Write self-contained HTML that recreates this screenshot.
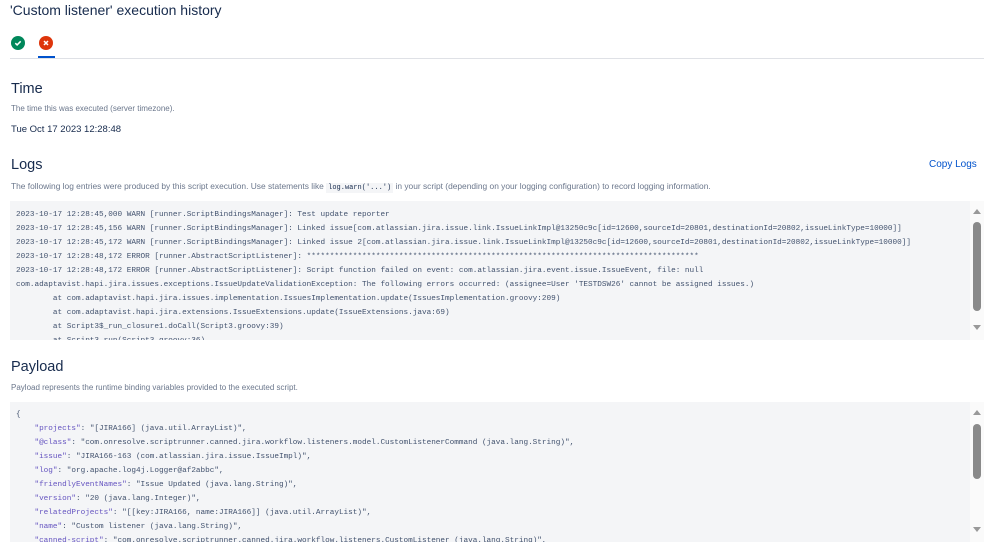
<!DOCTYPE html>
<html><head><meta charset="utf-8"><style>
*{margin:0;padding:0;box-sizing:border-box}
body{width:999px;height:560px;overflow:hidden;background:#fff;font-family:"Liberation Sans",sans-serif;color:#172b4d;position:relative}
.a{position:absolute;white-space:nowrap}
h1{font-weight:normal;font-size:14px}
h2{font-weight:normal;font-size:14.5px}
.d{font-size:8px;color:#6b778c}
.box{position:absolute;left:10px;width:974px;background:#f4f5f7;overflow:hidden}
.sb{position:absolute;right:0;top:0;bottom:0;width:14px;background:#fafafa}
.th{position:absolute;left:3px;width:8px;border-radius:4px;background:#8a8a8a}
.up,.dn{position:absolute;left:3px;width:0;height:0;border-left:4px solid transparent;border-right:4px solid transparent}
.up{border-bottom:5px solid #999}
.dn{border-top:5px solid #999}
pre{position:absolute;left:6px;font-family:"Liberation Mono",monospace;font-size:7.7px;line-height:14px;color:#42526e}
.k{color:#6554c0}
</style></head><body>
<h1 class="a" style="left:10px;top:2px">'Custom listener' execution history</h1>
<svg class="a" style="left:11px;top:36px" width="14" height="14"><circle cx="7" cy="7" r="7" fill="#00875a"/><path d="M4.3 7.2l1.8 1.7 3.6-3.6" stroke="#fff" stroke-width="1.5" fill="none"/></svg>
<svg class="a" style="left:39px;top:36px" width="14" height="14"><circle cx="7" cy="7" r="7" fill="#de350b"/><path d="M5 5l4 4M9 5l-4 4" stroke="#fff" stroke-width="1.5"/></svg>
<div class="a" style="left:10px;top:58px;width:974px;height:1px;background:#dfe1e6"></div>
<div class="a" style="left:38px;top:56px;width:17px;height:2px;background:#0052cc"></div>
<h2 class="a" style="left:11px;top:81px">Time</h2>
<div class="a d" style="left:11px;top:104px">The time this was executed (server timezone).</div>
<div class="a" style="left:11px;top:124px;font-size:9.5px">Tue Oct 17 2023 12:28:48</div>
<h2 class="a" style="left:11px;top:157px">Logs</h2>
<div class="a" style="left:929px;top:159px;font-size:10px;color:#0052cc">Copy Logs</div>
<div class="a d" style="left:11px;top:181px;font-size:8.4px">The following log entries were produced by this script execution. Use statements like <span style="font-family:'Liberation Mono',monospace;font-size:7px;background:#f4f5f7;padding:1px 2px;color:#172b4d">log.warn('...')</span> in your script (depending on your logging configuration) to record logging information.</div>
<div class="box" style="top:201px;height:139px">
<pre style="top:7px">2023-10-17 12:28:45,000 WARN [runner.ScriptBindingsManager]: Test update reporter
2023-10-17 12:28:45,156 WARN [runner.ScriptBindingsManager]: Linked issue[com.atlassian.jira.issue.link.IssueLinkImpl@13250c9c[id=12600,sourceId=20801,destinationId=20802,issueLinkType=10000]]
2023-10-17 12:28:45,172 WARN [runner.ScriptBindingsManager]: Linked issue 2[com.atlassian.jira.issue.link.IssueLinkImpl@13250c9c[id=12600,sourceId=20801,destinationId=20802,issueLinkType=10000]]
2023-10-17 12:28:48,172 ERROR [runner.AbstractScriptListener]: *************************************************************************************
2023-10-17 12:28:48,172 ERROR [runner.AbstractScriptListener]: Script function failed on event: com.atlassian.jira.event.issue.IssueEvent, file: null
com.adaptavist.hapi.jira.issues.exceptions.IssueUpdateValidationException: The following errors occurred: (assignee=User 'TESTDSW26' cannot be assigned issues.)
        at com.adaptavist.hapi.jira.issues.implementation.IssuesImplementation.update(IssuesImplementation.groovy:209)
        at com.adaptavist.hapi.jira.extensions.IssueExtensions.update(IssueExtensions.java:69)
        at Script3$_run_closure1.doCall(Script3.groovy:39)
        at Script3.run(Script3.groovy:36)</pre>
<div class="sb"><div class="up" style="top:8px"></div><div class="th" style="top:21px;height:89px"></div><div class="dn" style="top:124px"></div></div>
</div>
<h2 class="a" style="left:11px;top:359px">Payload</h2>
<div class="a d" style="left:11px;top:383px">Payload represents the runtime binding variables provided to the executed script.</div>
<div class="box" style="top:402px;height:140px">
<pre style="top:6px">{
    <span class="k">"projects"</span>: "[JIRA166] (java.util.ArrayList)",
    <span class="k">"@class"</span>: "com.onresolve.scriptrunner.canned.jira.workflow.listeners.model.CustomListenerCommand (java.lang.String)",
    <span class="k">"issue"</span>: "JIRA166-163 (com.atlassian.jira.issue.IssueImpl)",
    <span class="k">"log"</span>: "org.apache.log4j.Logger@af2abbc",
    <span class="k">"friendlyEventNames"</span>: "Issue Updated (java.lang.String)",
    <span class="k">"version"</span>: "20 (java.lang.Integer)",
    <span class="k">"relatedProjects"</span>: "[[key:JIRA166, name:JIRA166]] (java.util.ArrayList)",
    <span class="k">"name"</span>: "Custom listener (java.lang.String)",
    <span class="k">"canned-script"</span>: "com.onresolve.scriptrunner.canned.jira.workflow.listeners.CustomListener (java.lang.String)",</pre>
<div class="sb"><div class="up" style="top:8px"></div><div class="th" style="top:22px;height:55px"></div><div class="dn" style="top:125px"></div></div>
</div>
</body></html>
